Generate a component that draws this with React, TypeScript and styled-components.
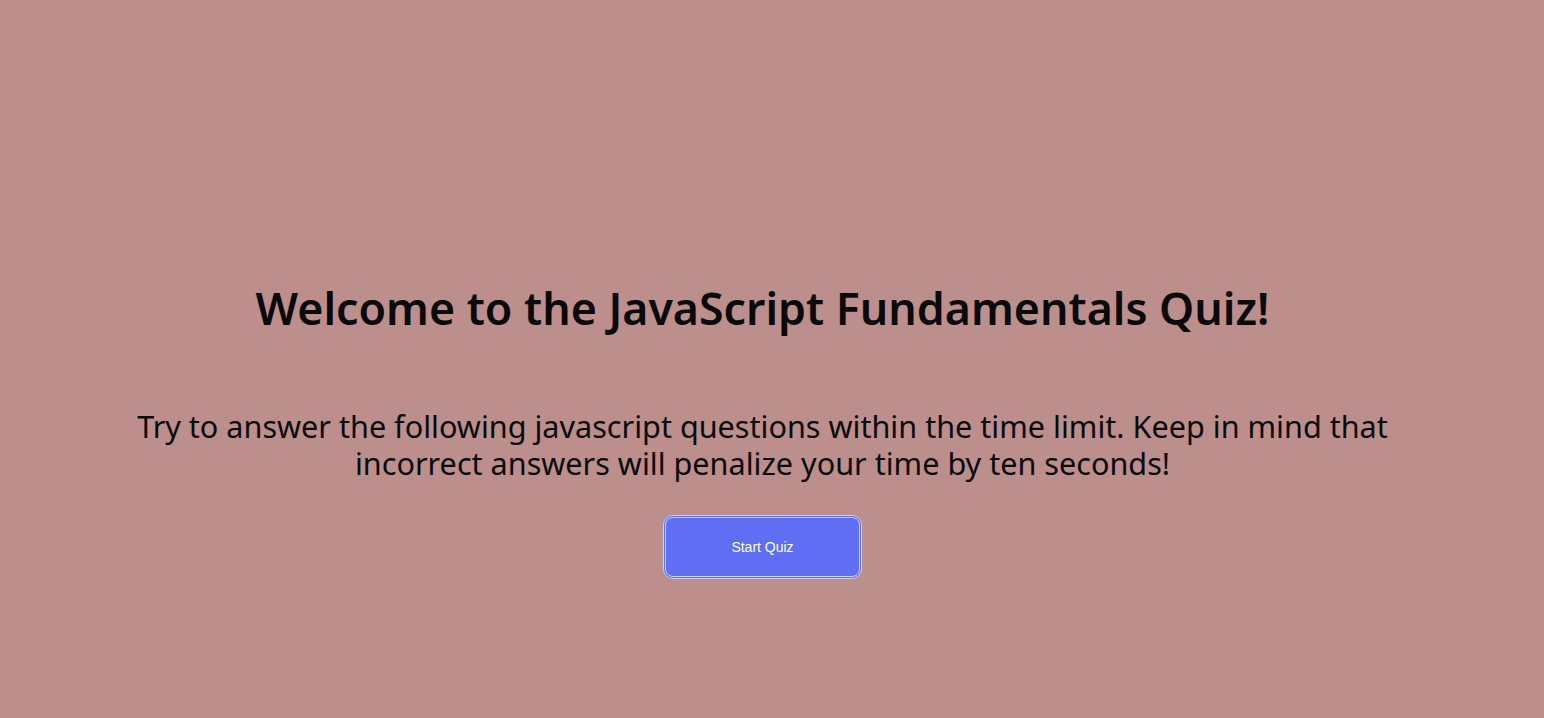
import React from "react";
import styled, { createGlobalStyle } from "styled-components";

const Global = createGlobalStyle`
  html, body { margin: 0; padding: 0; background: #bc8e8c; }
  body { font-family: "Noto Sans", "DejaVu Sans", sans-serif; }
`;

const Page = styled.main`
  box-sizing: border-box;
  width: 100%;
  height: 718px;
  padding: 0 19px 0 0;
  display: flex;
  flex-direction: column;
  align-items: center;
  color: #0a0a0a;
`;

const Title = styled.h1`
  margin: 278px 0 0;
  font-family: "Noto Sans", sans-serif;
  font-size: 44.7px;
  font-weight: 600;
  line-height: 60px;
  text-align: center;
`;

const Intro = styled.p`
  margin: 70px 0 0;
  max-width: 1300px;
  font-family: "Noto Sans", sans-serif;
  font-size: 30.6px;
  font-weight: 400;
  line-height: 37px;
  text-align: center;
`;

const StartButton = styled.button`
  margin-top: 33px;
  width: 199px;
  height: 64px;
  box-sizing: border-box;
  border: 3px double #cdd0ec;
  border-radius: 10px;
  background: #5f6ef2;
  color: #ffffff;
  font-family: "Liberation Sans", Arial, sans-serif;
  font-size: 14px;
  cursor: pointer;
`;

export default function App() {
  return (
    <>
      <Global />
      <Page>
        <Title>Welcome to the JavaScript Fundamentals Quiz!</Title>
        <Intro>
          Try to answer the following javascript questions within the time limit. Keep in mind that
          incorrect answers will penalize your time by ten seconds!
        </Intro>
        <StartButton>Start Quiz</StartButton>
      </Page>
    </>
  );
}
